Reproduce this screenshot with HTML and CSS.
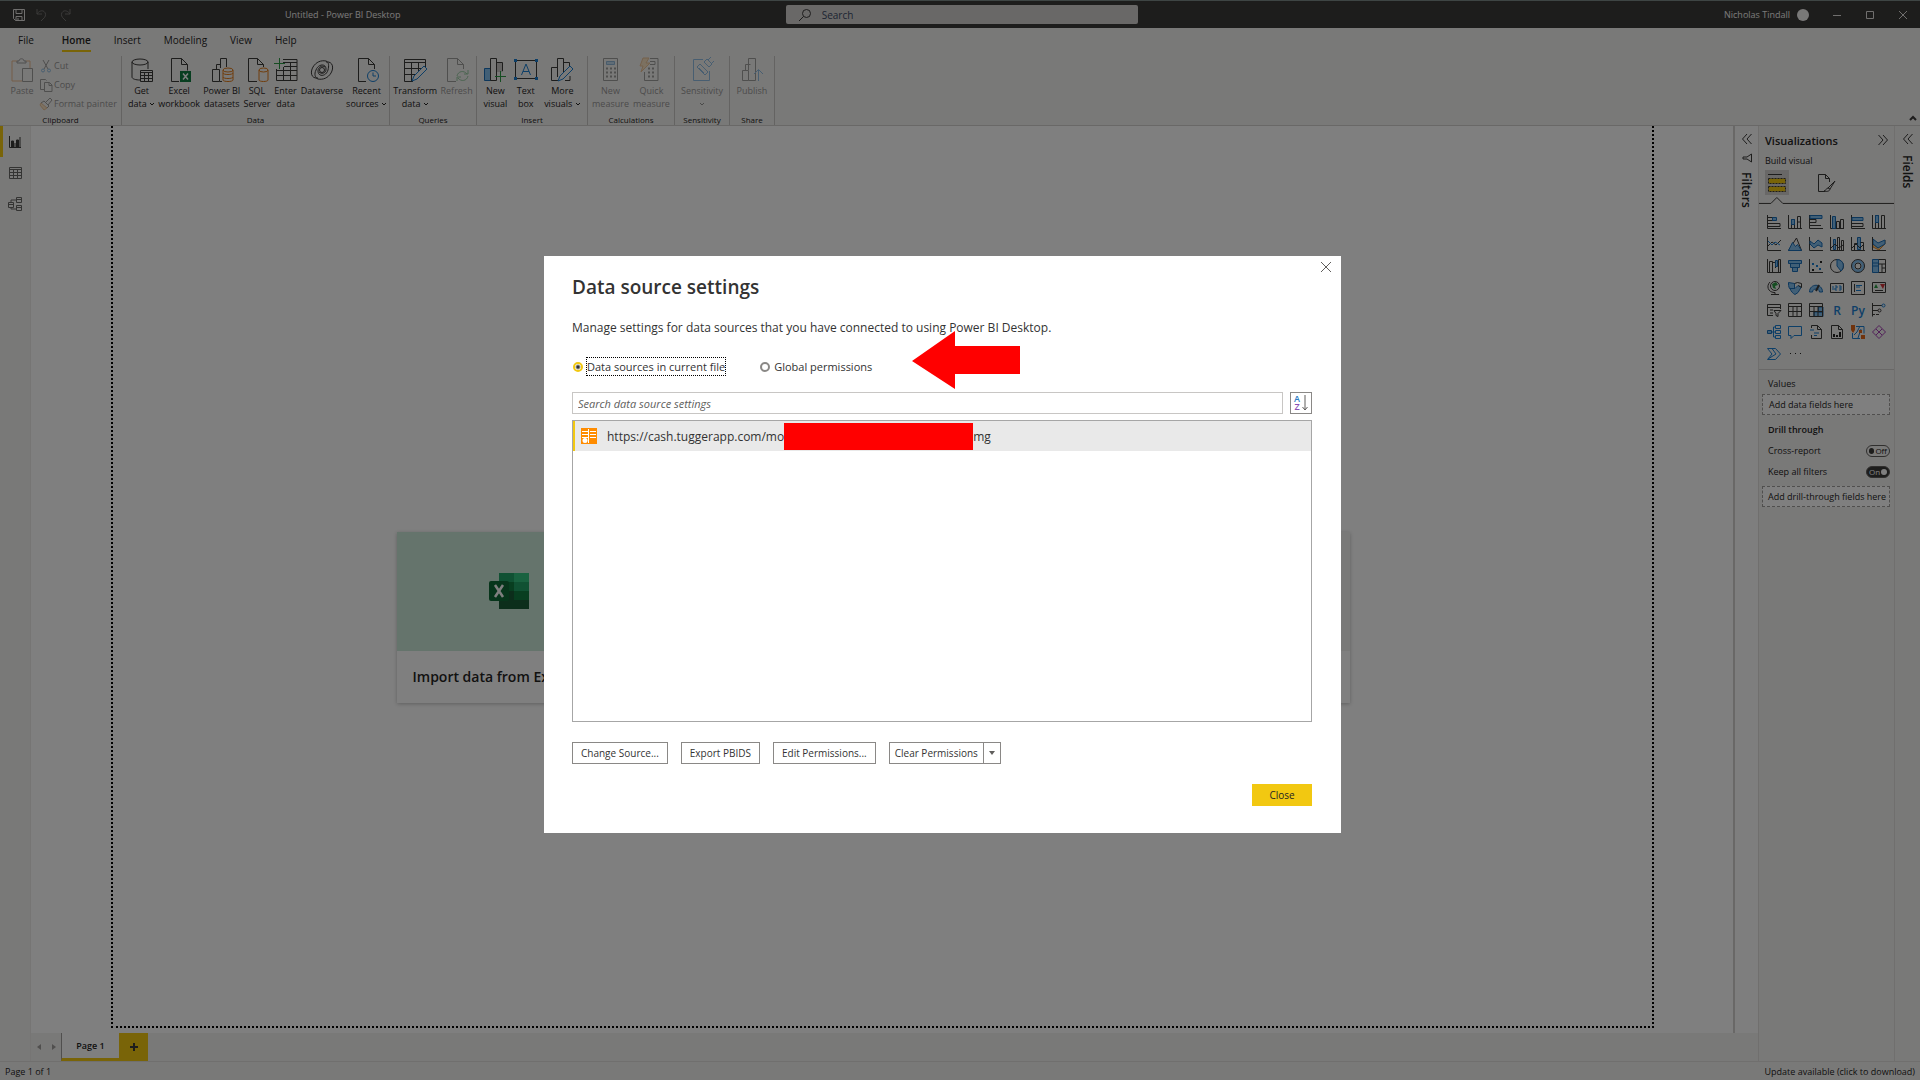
FILE: index.html
```html
<!DOCTYPE html>
<html lang="en">
<head>
    <meta charset="UTF-8">
    <meta name="viewport" content="width=device-width, initial-scale=1.0">
    <title>Untitled - Power BI Desktop</title>
    <link rel="stylesheet" href="styles.css">
</head>
<body>
    <div class="app">
        <header class="titlebar">
            <div class="quick">
                <button aria-label="Save"><svg class="ic14" viewBox="0 0 14 14"><path class="l" d="M1.500 1.500h11v11h-9l-2-2zM4 1.500v4h6v-4M4 12.500v-4h6v4M6 10v2"/></svg></button>
                <button class="off" aria-label="Undo"><svg class="ic14" viewBox="0 0 14 14"><path class="l" d="M2 1v5h5M2 6c2-3 5-4 7-2.500s2 4 .5 6L6 13"/></svg></button>
                <button class="off" aria-label="Redo"><svg class="ic14" viewBox="0 0 14 14"><path class="l" d="M12 1v5H7M12 6c-2-3-5-4-7-2.500s-2 4-.5 6L8 13"/></svg></button>
            </div>
            <div class="doc-title">Untitled - Power BI Desktop</div>
            <label class="top-search">
                <svg class="ic14" viewBox="0 0 14 14"><circle class="k" cx="8.500" cy="5.500" r="4"/><path class="k" d="M5.500 8.500L1 13"/></svg>
                <input type="text" placeholder="Search" aria-label="Search">
            </label>
            <div class="account">
                <span>Nicholas Tindall</span>
                <span class="avatar"></span>
                <button aria-label="Minimize"><svg class="ic10" viewBox="0 0 10 10"><path class="l" d="M1 5.500h8"/></svg></button>
                <button aria-label="Maximize"><svg class="ic10" viewBox="0 0 10 10"><path class="l" d="M1.500 1.500h7v7h-7z"/></svg></button>
                <button aria-label="Close window"><svg class="ic10" viewBox="0 0 10 10"><path class="l" d="M1 1l8 8M9 1L1 9"/></svg></button>
            </div>
        </header>

        <nav class="tabs">
            <a href="#" class="file">File</a>
            <a href="#" class="active">Home</a>
            <a href="#">Insert</a>
            <a href="#">Modeling</a>
            <a href="#">View</a>
            <a href="#">Help</a>
        </nav>

        <div class="ribbon">
            <section class="group g-clipboard">
                <div class="tools">
                    <button class="tool off"><svg class="ic24" viewBox="0 0 24 24"><path class="o" d="M7 3H2v20h10M16 3h4v7"/><path class="k" d="M7 5V3h2c0-3 5-3 5 0h2v2zM12.500 10.500h10v13h-10z"/></svg><span>Paste</span></button>
                    <div class="stack">
                        <button class="small off"><svg class="ic14" viewBox="0 0 14 14"><path class="k" d="M4 1l5 9M10 1L5 10"/><circle class="b" cx="4" cy="11.500" r="1.500"/><circle class="b" cx="10" cy="11.500" r="1.500"/></svg>Cut</button>
                        <button class="small off"><svg class="ic14" viewBox="0 0 14 14"><path class="k" d="M5 11.500H1.500v-10h5l1 1M5.500 4.500h5l2.500 2.500v6.500H5.500zM10 4.500v3h3"/></svg>Copy</button>
                        <button class="small off"><svg class="ic14" viewBox="0 0 14 14"><path class="of" d="M2 6l6 5-3 2-4-5z"/><path class="k" d="M5 4l5 5M7 5l4-4 2 2-4 5M2 6l3-2M8 11l2-2"/></svg>Format painter</button>
                    </div>
                </div>
                <h2>Clipboard</h2>
            </section>
            <section class="group g-data">
                <div class="tools">
                    <button class="tool"><svg class="ic24" viewBox="0 0 24 24"><ellipse class="k" cx="10" cy="4" rx="8" ry="3"/><path class="k" d="M2 4v15c0 2 4 3 8 3M18 4v7"/><path class="k" d="M10.500 12.500h12v11h-12zM10.500 14.500h12M10.500 17.500h12M10.500 20.500h12M14.500 14v9.500M18.500 14v9.500"/></svg><span>Get<br>data <svg class="chev" viewBox="0 0 6 6"><path d="M1 2l2 2 2-2"/></svg></span></button>
                    <button class="tool"><svg class="ic24" viewBox="0 0 24 24"><path class="k" d="M12 23.500H4.500v-23h10l6 6v6M14.500.500v6h6"/><path class="gf" d="M13 13h11v11H13z"/><path class="w" d="M16 15.500l5 6M21 15.500l-5 6"/></svg><span>Excel<br>workbook</span></button>
                    <button class="tool"><svg class="ic24" viewBox="0 0 24 24"><path class="k" d="M2.500 11.500h7v12h-7zM6.500 11V6.500h4M10.500 10V.500h6V9M9.500 23.500H12"/><path class="o" d="M13 12v10c0 2 10 2 10 0V12M13 15c0 2 10 2 10 0M13 19c0 2 10 2 10 0"/><ellipse class="o" cx="18" cy="12" rx="5" ry="2"/></svg><span>Power BI<br>datasets</span></button>
                    <button class="tool"><svg class="ic24" viewBox="0 0 24 24"><path class="k" d="M12 23.500H3.500v-23h9l6 6V9M12.500.500v6h6"/><path class="o" d="M14 12v10c0 2 9 2 9 0V12"/><ellipse class="o" cx="18.500" cy="12" rx="4.500" ry="2"/></svg><span>SQL<br>Server</span></button>
                    <button class="tool"><svg class="ic24" viewBox="0 0 24 24"><path class="k" d="M9 1.500h14v21H2.500V11M9 4.500h14M10 8.500h13M2.500 12.500H23M2.500 17.500H23M9.500 9v13.500M16.500 5v17.500"/><path class="g" d="M5.500 0v11M0 5.500h11"/></svg><span>Enter<br>data</span></button>
                    <button class="tool"><svg class="ic24" viewBox="0 0 24 24"><path class="k" d="M8 20C1 21 0 14 3 9s8-7 13-6c3 1 3 5 2 9-2 7-10 7-10 1 0-4 4-6 7-4M16 4c7-1 8 6 5 11s-8 7-13 6c-3-1-4-5-2-9 2-6 10-7 10-1 0 5-5 5-7 3"/><circle class="k" cx="12" cy="12" r="2.500"/></svg><span>Dataverse</span></button>
                    <button class="tool"><svg class="ic24" viewBox="0 0 24 24"><path class="k" d="M11 23.500H3.500v-23h10l6 6V11M13.500.500v6h6"/><circle class="b" cx="18" cy="18" r="5.500"/><path class="b" d="M18 14.500V18h3"/></svg><span>Recent<br>sources <svg class="chev" viewBox="0 0 6 6"><path d="M1 2l2 2 2-2"/></svg></span></button>
                </div>
                <h2>Data</h2>
            </section>
            <section class="group g-queries">
                <div class="tools">
                    <button class="tool"><svg class="ic24" viewBox="0 0 24 24"><path class="k" d="M10 23.500H1.500v-22h21V9M1.500 4.500h21M1.500 10.500h17M1.500 16.500H13M8.500 5v18M15.500 5v8"/><path class="b" d="M9 23l2-5L21 8l3 3-10 10z"/></svg><span>Transform<br>data <svg class="chev" viewBox="0 0 6 6"><path d="M1 2l2 2 2-2"/></svg></span></button>
                    <button class="tool off"><svg class="ic24" viewBox="0 0 24 24"><path class="k" d="M11 23.500H2.500v-23h10l6 6V11M12.500.500v6h6"/><path class="g" d="M23 12v4h-4M22 16c-3-4-9-3-10 2M12 23v-4h4M13 20c3 4 9 3 10-2"/></svg><span>Refresh</span></button>
                </div>
                <h2>Queries</h2>
            </section>
            <section class="group g-insert">
                <div class="tools">
                    <button class="tool"><svg class="ic24" viewBox="0 0 24 24"><path class="bf" d="M1.500 10.500h6v12h-6z"/><path class="k" d="M7.500 22.500V.500h6v22z"/><path class="s" d="M14 5h6v9h-6z"/><path class="k" d="M13.500 4.500h6V13"/><path class="g" d="M17.500 13v11M12 18.500h11"/></svg><span>New<br>visual</span></button>
                    <button class="tool"><svg class="ic24" viewBox="0 0 24 24"><path class="k" d="M1.500 2.500h21v18h-21z"/><path class="bs" d="M0 1h3v3H0zM21 1h3v3h-3zM0 19h3v3H0zM21 19h3v3h-3z"/><path class="b" d="M7.500 17L12 6l4.500 11M9 13.500h6"/></svg><span>Text<br>box</span></button>
                    <button class="tool"><svg class="ic24" viewBox="0 0 24 24"><path class="k" d="M8 22.500H1.500v-13h6M7.500 19V.500h6V14M13.500 4.500h6V8M15 22.500h5V18"/><path class="b" d="M8 23l2-5L20 8l3 3-10 10z"/></svg><span>More<br>visuals <svg class="chev" viewBox="0 0 6 6"><path d="M1 2l2 2 2-2"/></svg></span></button>
                </div>
                <h2>Insert</h2>
            </section>
            <section class="group g-calc">
                <div class="tools">
                    <button class="tool off"><svg class="ic24" viewBox="0 0 24 24"><path class="k" d="M4.500.500h14v22h-14z"/><path class="bf" d="M7.500 3.500h8v3h-8z"/><path class="dots" d="M7 10.500h10M7 14.500h10M7 18.500h10"/></svg><span>New<br>measure</span></button>
                    <button class="tool off"><svg class="ic24" viewBox="0 0 24 24"><path class="k" d="M11 .500h8v22H5.500V14M11 3.500h5v3h-5"/><path class="dots" d="M9 10.500h8M9 14.500h8M9 18.500h8"/><path class="of" d="M4 0h6L7 5h4l-9 9 2-6H1z"/></svg><span>Quick<br>measure</span></button>
                </div>
                <h2>Calculations</h2>
            </section>
            <section class="group g-sens">
                <div class="tools">
                    <button class="tool off"><svg class="ic24" viewBox="0 0 24 24"><path class="b" d="M13 1.500H3.500v21h16V13M7 9l3-3 8 8-3 3zM9 10l5 5M14 4l3-3 5 5-3 3zM18 2l3-3M22 5l2-2"/></svg><span>Sensitivity<br><svg class="chev" viewBox="0 0 6 6"><path d="M1 2l2 2 2-2"/></svg></span></button>
                </div>
                <h2>Sensitivity</h2>
            </section>
            <section class="group g-share">
                <div class="tools">
                    <button class="tool off"><svg class="ic24" viewBox="0 0 24 24"><path class="k" d="M2.500 12.500h6v10h-6zM5.500 12V6.500h5M8.500 12V.500h7V10M8.500 22.500h7V10"/><path class="b" d="M18.500 23V12M14 16l4.500-4.500L23 16"/></svg><span>Publish</span></button>
                </div>
                <h2>Share</h2>
            </section>
            <button class="collapse" aria-label="Collapse ribbon"><svg class="ic10" viewBox="0 0 10 10"><path class="k thick" d="M2 7l3-3 3 3"/></svg></button>
        </div>

        <main class="workspace">
            <nav class="rail">
                <button class="active" aria-label="Report view"><svg class="ic14" viewBox="0 0 14 14"><path class="k" d="M1.500 1v11.500H13M4.500 12V6M7 12V8M9.500 12V5M12 12V2M3.500 12V6h2v6M8.500 12V5h2v7"/></svg></button>
                <button aria-label="Data view"><svg class="ic14" viewBox="0 0 14 14"><path class="k" d="M1.500 1.500h12v11h-12zM1.500 3.500h12M1.500 6.500h12M1.500 9.500h12M5.500 3v9.500M9.500 3v9.500"/></svg></button>
                <button aria-label="Model view"><svg class="ic14" viewBox="0 0 14 14"><path class="k" d="M.500 5.500h5v5h-5zM.500 7.500h5M8.500.500h5v5h-5zM8.500 2.500h5M8.500 8.500h5v5h-5zM8.500 10.500h5M3 5V3h5M3 11v1h5"/></svg></button>
            </nav>

            <div class="center">
                <div class="report-row">
                    <div class="report">
                        <div class="page">
                            <article class="card excel">
                                <div class="art">
                                    <svg class="excel-logo" viewBox="0 0 40 36"><path fill="#21a366" d="M10 0h30v9H10z"/><path fill="#107c41" d="M10 9h15v18H10z"/><path fill="#33c481" d="M25 0h15v9H25z"/><path fill="#21a366" d="M25 9h15v9H25z"/><path fill="#107c41" d="M25 18h15v9H25z"/><path fill="#185c37" d="M10 18h15v9H10zM10 27h30v9H10z"/><rect fill="#0e6b36" y="8" width="20" height="20" rx="2"/><path stroke="#fff" stroke-width="2.500" d="M6 12l8 12M14 12L6 24"/></svg>
                                </div>
                                <h3>Import data from Excel</h3>
                            </article>
                            <article class="card"><div class="art"></div></article>
                            <article class="card"><div class="art"></div></article>
                            <article class="card"><div class="art"></div></article>
                        </div>
                    </div>
                    <aside class="side filters">
                        <button aria-label="Expand filters"><svg class="ic10" viewBox="0 0 10 10"><path class="k" d="M5 0L.500 5 5 10M9.500 0L5 5l4.500 5"/></svg></button>
                        <svg class="ic10" viewBox="0 0 10 10"><path class="k" d="M9.500 1v8L5 6H1V4h4z"/></svg>
                        <span>Filters</span>
                    </aside>
                </div>
                <div class="pagebar">
                    <button class="arrow" aria-label="Previous page"><svg class="ic6" viewBox="0 0 6 6"><path d="M5 0v6L1 3z"/></svg></button>
                    <button class="arrow" aria-label="Next page"><svg class="ic6" viewBox="0 0 6 6"><path d="M1 0v6l4-3z"/></svg></button>
                    <button class="page-tab">Page 1</button>
                    <button class="add-page" aria-label="New page"><svg class="ic10" viewBox="0 0 10 10"><path d="M5 1v8M1 5h8"/></svg></button>
                </div>
            </div>

            <aside class="viz">
                <div class="viz-head">
                    <h2>Visualizations</h2>
                    <button aria-label="Collapse visualizations"><svg class="ic10" viewBox="0 0 10 10"><path class="k" d="M.500 0L5 5 .500 10M5 0l4.500 5L5 10"/></svg></button>
                </div>
                <h3>Build visual</h3>
                <div class="modes">
                    <button class="active" aria-label="Build visual"><svg class="ic20" viewBox="0 0 20 20"><path class="k" d="M1 1.500h14"/><path class="y" d="M1.500 5.500h17v5h-17zM1.500 13.500h17v5h-17z"/></svg></button>
                    <button aria-label="Format visual"><svg class="ic20" viewBox="0 0 20 20"><path class="k" d="M9 18.500H2.500v-17h7l4 4V9M9.500 1.500v4h4M19 8l-7 7M19 8l-5 8M12 15c-2 0-2 3-4 3 3 1 6 0 6-2z"/></svg></button>
                </div>
                <svg class="notch" viewBox="0 0 136 8" preserveAspectRatio="xMinYMin"><path class="k" d="M0 6.500h12l6-6 6 6h112"/></svg>
                <div class="gallery">
                    <button aria-label="Stacked bar"><svg viewBox="0 0 14 14"><path class="k" d="M.500 0v13.500H14M1 2.500h5v3H1M1 8.500h12v3H1"/><path class="bf" d="M5.500 2.500h4v3h-4z"/></svg></button>
                    <button aria-label="Stacked column"><svg viewBox="0 0 14 14"><path class="k" d="M.500 0v13.500H14M3.500 13V4.500h3V13M9.500 13V1.500h3V13M9.500 7h3"/><path class="bf" d="M3.500 4.500h3v5h-3z"/></svg></button>
                    <button aria-label="Clustered bar"><svg viewBox="0 0 14 14"><path class="k" d="M.500 0v13.500H14M1 4.500h6v3H1M1 10.500h11"/><path class="bf" d="M1 .500h12v3H1z"/></svg></button>
                    <button aria-label="Clustered column"><svg viewBox="0 0 14 14"><path class="k" d="M.500 0v13.500H14M6.500 13V6.500h3V13M10.500 13V4.500h3V13"/><path class="bf" d="M2.500 1.500h3v12h-3z"/></svg></button>
                    <button aria-label="100% stacked bar"><svg viewBox="0 0 14 14"><path class="k" d="M.500 0v13.500H14M1 8.500h11v3H1"/><path class="bf" d="M1 2.500h11v3H1z"/></svg></button>
                    <button aria-label="100% stacked column"><svg viewBox="0 0 14 14"><path class="k" d="M.500 0v13.500H14M9.500 13V.500h3V13M3.500 13V.500h3V13"/><path class="bf" d="M3.500 .500h3v7h-3z"/></svg></button>

                    <button aria-label="Line"><svg viewBox="0 0 14 14"><path class="k" d="M.500 0v13.500H14M1 9l4-4 4 3 5-5"/><path class="b" d="M1 4l4 4 3-3 5 3"/></svg></button>
                    <button aria-label="Area"><svg viewBox="0 0 14 14"><path class="k" d="M.500 13.500L8.500 1l5 12.500z"/><path class="bf" d="M.500 13.500l4-8 3 4 2-2 4 6z"/></svg></button>
                    <button aria-label="Stacked area"><svg viewBox="0 0 14 14"><path class="k" d="M.500 0v13.500H14"/><path class="bf" d="M1 4l4 3 4-4 4 3v4l-4-2-4 3-4-4z"/></svg></button>
                    <button aria-label="Line and stacked column"><svg viewBox="0 0 14 14"><path class="bf" d="M3.500 2.500h2v10h-2z"/><path class="k" d="M.500 0v13.500H14M7.500 13V.500h2V13M11.500 13V3.500h2V13M1 11l4-4 4 4 4-3"/></svg></button>
                    <button aria-label="Line and clustered column"><svg viewBox="0 0 14 14"><path class="bf" d="M6.500 .500h3v12h-3z"/><path class="k" d="M.500 0v13.500H14M3.500 13V6.500h3M9.500 5.500h3V13M1 11l4-4 4 4 4-4"/></svg></button>
                    <button aria-label="Ribbon"><svg viewBox="0 0 14 14"><path class="of" d="M1 7l5 4 7-8v4l-6 6-6-3z"/><path class="bf" d="M1 2l5 4 7-3v4l-7 4-5-4z"/><path class="k" d="M.500 0v13.500H14"/></svg></button>

                    <button aria-label="Waterfall"><svg viewBox="0 0 14 14"><path class="k" d="M.500 0v13.500H14M2.500 13V2.500h3V13M5.500 3.500h3V9M11.500 13V.500h2V13"/><path class="bf" d="M8.500 1.500h2v6h-2z"/></svg></button>
                    <button aria-label="Funnel"><svg viewBox="0 0 14 14"><path class="bf" d="M.500 1.500h13v3H.500zM2.500 4.500h9v4h-9zM4.500 8.500h5v4h-5z"/></svg></button>
                    <button aria-label="Scatter"><svg viewBox="0 0 14 14"><path class="k" d="M.500 0v13.500H14"/><path class="bs" d="M3 4h2v2H3zM7 6h2v2H7zM10 9h2v2h-2z"/><path class="ks" d="M11 2h2v2h-2zM3 10h2v2H3z"/></svg></button>
                    <button aria-label="Pie"><svg viewBox="0 0 14 14"><circle class="k" cx="7" cy="7" r="6.500"/><path class="bf" d="M7 .500V7l4 5c4-4 3-11-4-11.500z"/></svg></button>
                    <button aria-label="Donut"><svg viewBox="0 0 14 14"><circle class="ring" cx="7" cy="7" r="5"/><circle class="k" cx="7" cy="7" r="6.500"/><circle class="k" cx="7" cy="7" r="3"/></svg></button>
                    <button aria-label="Treemap"><svg viewBox="0 0 14 14"><path class="bf" d="M.500.500h6v13h-6zM.500 7h6M.500 4h6"/><path class="k" d="M6.500.500h7v13h-7M6.500 5h7M10 5v8M10 9h3"/></svg></button>

                    <button aria-label="Map"><svg viewBox="0 0 14 14"><circle class="k" cx="8" cy="5" r="4.500"/><path class="gs" d="M5 3l4-2 2 3-3 1 1 3-3-1z"/><path class="k" d="M3 1C-1 5 1 11 7 11.500h1v2M4 13.500h8"/></svg></button>
                    <button aria-label="Filled map"><svg viewBox="0 0 14 14"><path class="bf" d="M.500 1.500l6 1v5h-5c-1-2-1-4-1-6zM2 7.500h5l3-3 3 2-3 5-3 2c-2-1-4-3-5-6z"/><path class="k" d="M6.500 2.500l3-1 4 1v4l-3-2"/></svg></button>
                    <button aria-label="Gauge"><svg viewBox="0 0 14 14"><path class="bf" d="M.500 11c0-9 13-9 13 0h-3c0-4-7-4-7 0z"/><path class="k thick" d="M7 10l3-6"/></svg></button>
                    <button aria-label="Card"><svg viewBox="0 0 14 14"><path class="k" d="M.500 2.500h13v9H.500z"/><path class="b" d="M3 5v4M5 5h2v2H5v2h2M9 5h2v4H9M9 7h2"/></svg></button>
                    <button aria-label="Multi-row card"><svg viewBox="0 0 14 14"><path class="k" d="M.500.500h13v13H.500zM3.500 3v8"/><path class="b" d="M5 4.500h6M5 6h4M5 9.500h5"/></svg></button>
                    <button aria-label="KPI"><svg viewBox="0 0 14 14"><path class="k" d="M.500 1.500h13v10H.500zM3 9.500h8"/><path class="gs" d="M2 7l2-4 2 4z"/><path class="rs" d="M8 3h5l-2 5z"/></svg></button>

                    <button aria-label="Slicer"><svg viewBox="0 0 14 14"><path class="k" d="M6 12.500H.500v-11h13V6M.500 4.500h13M3 7h3M3 10h3M7 7.500h7l-3 3v3l-2-1v-2z"/></svg></button>
                    <button aria-label="Table"><svg viewBox="0 0 14 14"><path class="k" d="M.500.500h13v13H.500zM.500 3.500h13M.500 8.500h13M5 3v10M9 3v10"/></svg></button>
                    <button aria-label="Matrix"><svg viewBox="0 0 14 14"><path class="bf" d="M5 9h9v4.500H5zM9.500 4H14v5H9.500z"/><path class="k" d="M.500.500h13v13H.500zM.500 3.500h13M.500 8.500h13M5 3v10M9 3v10"/></svg></button>
                    <button class="letter">R</button>
                    <button class="letter">Py</button>
                    <button aria-label="Key influencers"><svg viewBox="0 0 14 14"><path class="k" d="M.500 0v13.500M1 2.500h9M1 7.500h5M1 11.500h2"/><circle class="b" cx="11.500" cy="2.500" r="1.500"/><circle class="k" cx="7.500" cy="7.500" r="1.500"/><path class="k" d="M4 11.500h3"/></svg></button>

                    <button aria-label="Decomposition tree"><svg viewBox="0 0 14 14"><path class="bf" d="M.500 5.500h4v3h-4z"/><path class="b" d="M8.500 .500h5v3h-5zM8.500 5.500h5v3h-5zM8.500 10.500h5v3h-5zM5 7h3M6.500 2v10M6.500 2H8M6.500 12H8"/></svg></button>
                    <button aria-label="Q&amp;A"><svg viewBox="0 0 14 14"><path class="b" d="M.500 1.500h13v9H6l-3 3v-3H.500z"/></svg></button>
                    <button aria-label="Smart narrative"><svg viewBox="0 0 14 14"><path class="k" d="M2.500 3V.500h6l4 4v9h-10V10M8.500.500v4h4"/><path class="b" d="M1 5h4M5 8h5M5 10.500h3"/></svg></button>
                    <button aria-label="Paginated report"><svg viewBox="0 0 14 14"><path class="k" d="M1.500.500h7l4 4v9h-11zM8.500.500v4h4"/><path class="ks" d="M3 9h2v3H3zM6 10h2v2H6zM9 7h2v5H9z"/></svg></button>
                    <button aria-label="ArcGIS map"><svg viewBox="0 0 14 14"><path class="b" d="M5 1.500h8v7M1.500 8v5.500H9M9 1l-3 6-3 3M10 4l-3 9"/><path class="os" d="M0 0h4v5L2 8 0 5zM8 5h3v3H8zM10 10h4v4h-4z"/></svg></button>
                    <button aria-label="Power Apps"><svg viewBox="0 0 14 14"><path class="p" d="M7 .500L13.500 7 7 13.500.500 7zM4 4l6 6M10 4l-6 6"/></svg></button>

                    <button aria-label="Power Automate"><svg viewBox="0 0 14 14"><path class="b" d="M.500 1.500h8l5 5.500-5 5.500h-8L5 7zM5 1.500L9 7l-8 5"/></svg></button>
                    <button aria-label="More visuals"><svg viewBox="0 0 14 14"><path class="ks" d="M2 6h1v1H2zM7 6h1v1H7zM12 6h1v1h-1z"/></svg></button>
                </div>
                <div class="wells">
                    <h4 class="plain">Values</h4>
                    <div class="well">Add data fields here</div>
                    <h4>Drill through</h4>
                    <label class="switch">Cross-report <input type="checkbox"><span class="knob"></span></label>
                    <label class="switch">Keep all filters <input type="checkbox" checked><span class="knob"></span></label>
                    <div class="well drill">Add drill-through fields here</div>
                </div>
            </aside>

            <aside class="side fields">
                <button aria-label="Expand fields"><svg class="ic10" viewBox="0 0 10 10"><path class="k" d="M5 0L.500 5 5 10M9.500 0L5 5l4.500 5"/></svg></button>
                <span>Fields</span>
            </aside>
        </main>

        <footer class="status">
            <span>Page 1 of 1</span>
            <a href="#">Update available (click to download)</a>
        </footer>
    </div>

    <div class="backdrop">
        <div class="dialog" role="dialog" aria-labelledby="dialog-title">
            <button class="dismiss" aria-label="Close dialog"><svg viewBox="0 0 12 12"><path d="M1 1l10 10M11 1L1 11"/></svg></button>
            <h1 id="dialog-title">Data source settings</h1>
            <p>Manage settings for data sources that you have connected to using Power BI Desktop.</p>
            <div class="scope">
                <label><input type="radio" name="scope" checked><span>Data sources in current file</span></label>
                <label><input type="radio" name="scope"><span>Global permissions</span></label>
                <svg class="pointer" viewBox="0 0 108 58"><path d="M0 30L43 0v15h65v28H43v15z"/></svg>
            </div>
            <div class="search-row">
                <input type="text" placeholder="Search data source settings" aria-label="Search data source settings">
                <button class="sort" aria-label="Sort A to Z"><span><b>A</b><i>Z</i></span><svg viewBox="0 0 6 16"><path d="M3 0v15M.500 12L3 15l2.500-3"/></svg></button>
            </div>
            <ul class="sources">
                <li>
                    <svg class="source-icon" viewBox="0 0 16 16"><path fill="#ff8c00" d="M0 0h16v16H0z"/><path stroke="#fff" d="M1 3.500h6M9 3.500h6M1 6.500h6M9 6.500h6M9 9.500h6M1 9.500h6M7.500 1v14"/><circle fill="#fff" cx="4" cy="12.500" r="2.500"/></svg>
                    <span>https://cash.tuggerapp.com/mo</span><span class="redacted"></span><span>mg</span>
                </li>
            </ul>
            <div class="actions">
                <button>Change Source...</button>
                <button>Export PBIDS</button>
                <button>Edit Permissions...</button>
                <div class="split">
                    <button>Clear Permissions</button>
                    <button aria-label="More clear options"><svg viewBox="0 0 6 4"><path d="M0 0h6L3 4z"/></svg></button>
                </div>
            </div>
            <div class="footer"><button class="primary">Close</button></div>
        </div>
    </div>
</body>
</html>
```
FILE: styles.css
```css
* {
    box-sizing: border-box;
}

body {
    margin: 0;
    font-family: "Open Sans", "Noto Sans", sans-serif;
    font-size: 9px;
    color: #252423;
}

h1, h2, h3, h4, p, ul {
    margin: 0;
    padding: 0;
}

button {
    display: flex;
    align-items: center;
    justify-content: center;
    padding: 0;
    border: none;
    background: none;
    font: inherit;
    color: inherit;
    white-space: nowrap;
}

input {
    margin: 0;
    font: inherit;
    color: inherit;
}

a {
    color: inherit;
    text-decoration: none;
}

svg {
    display: block;
    flex: none;
    overflow: visible;
    fill: none;
}

/* icon sizes */
.ic6 { width: 6px; height: 6px; }
.ic10 { width: 10px; height: 10px; }
.ic14 { width: 14px; height: 14px; }
.ic20 { width: 20px; height: 20px; }
.ic24 { width: 24px; height: 24px; }

/* icon strokes and fills */
.k { stroke: #3b3a39; }
.l { stroke: #e1dfdd; }
.w { stroke: #fff; stroke-width: 1.5; }
.b { stroke: #1b7fd0; }
.o { stroke: #e07b1a; }
.g { stroke: #2c9a45; }
.p { stroke: #a33fb0; }
.thick { stroke-width: 2; }
.bf { fill: #83beec; stroke: #1b6fb8; }
.bs { fill: #1b7fd0; }
.ks { fill: #252423; }
.gf { fill: #107c41; }
.gs { fill: #2c9a45; }
.rs { fill: #d13438; }
.os { fill: #e0661a; }
.of { fill: #ffcf8a; stroke: #e08a2e; }
.s { fill: #c8c6c4; }
.y { fill: #f2c811; stroke: #3b3a39; stroke-dasharray: 2 1; }
.ring { stroke: #83beec; stroke-width: 3; }
.dots { stroke: #3b3a39; stroke-width: 2; stroke-dasharray: 2 2; }

.app {
    display: flex;
    flex-direction: column;
    height: 100vh;
    background: #f3f2f1;
}

.titlebar {
    display: grid;
    grid-template-columns: 285px 13fr 352px 20fr;
    align-items: center;
    height: 28px;
    padding-right: 12px;
    border-top: 1px solid #7c8a88;
    background: #3b3a39;
    color: #f3f2f1;
}

.quick {
    display: flex;
    gap: 9px;
    padding-left: 12px;
}

.off {
    opacity: .45;
}

.quick .off {
    opacity: .35;
}

.top-search {
    display: flex;
    align-items: center;
    gap: 8px;
    height: 19px;
    padding-left: 12px;
    border-radius: 2px;
    background: #d2d0ce;
}

.top-search input {
    flex: 1;
    min-width: 0;
    border: none;
    background: none;
    font-size: 10px;
}

.top-search input::placeholder {
    color: #3b4a66;
    opacity: 1;
}

.account {
    display: flex;
    align-items: center;
    justify-content: flex-end;
    gap: 23px;
}

.avatar {
    width: 12px;
    height: 12px;
    margin-left: -16px;
    border-radius: 50%;
    background: #f3f2f1;
}

.tabs {
    display: flex;
    gap: 23px;
    height: 28px;
    padding-left: 18px;
    font-size: 10px;
    line-height: 24px;
}

.tabs a {
    height: 24px;
}

.tabs .file {
    margin-right: 5px;
}

.tabs .active {
    border-bottom: 2px solid #f2c811;
    font-weight: 600;
}

.ribbon {
    display: flex;
    height: 70px;
    border-bottom: 1px solid #d2d0ce;
}

.group {
    display: flex;
    flex-direction: column;
    justify-content: space-between;
    border-right: 1px solid #c8c6c4;
}

.group h2 {
    font-size: 8px;
    font-weight: 400;
    line-height: 10px;
    text-align: center;
}

.g-clipboard { width: 122px; }
.g-data { width: 268px; }
.g-queries { width: 87px; }
.g-insert { width: 111px; }
.g-calc { width: 87px; }
.g-sens { width: 55px; }
.g-share { width: 45px; }

.tools {
    display: flex;
    justify-content: space-evenly;
}

.g-clipboard .tools {
    justify-content: flex-start;
    gap: 5px;
    padding-left: 10px;
}

.g-data .tools {
    justify-content: space-between;
    padding: 0 2px 0 6px;
}

.tool {
    flex-direction: column;
    justify-content: flex-start;
    gap: 2px;
    padding-top: 2px;
    line-height: 13px;
}

.chev {
    display: inline-block;
    width: 6px;
    height: 6px;
    stroke: currentColor;
}

.stack {
    display: flex;
    flex-direction: column;
}

.small {
    justify-content: flex-start;
    gap: 1px;
    height: 19px;
}

.collapse {
    align-self: flex-end;
    margin-left: auto;
    padding: 2px;
}

.workspace {
    display: flex;
    flex: 1;
    min-height: 0;
}

.rail {
    width: 31px;
    border-right: 1px solid #edebe9;
}

.rail button {
    width: 100%;
    height: 31px;
    opacity: .75;
}

.rail .active {
    border-left: 3px solid #f2c811;
    padding-right: 3px;
    opacity: 1;
}

.center {
    display: flex;
    flex: 1;
    flex-direction: column;
    min-width: 0;
}

.report-row {
    display: flex;
    flex: 1;
    background: #fff;
}

.report {
    flex: 1;
    padding: 0 79px 5px 80px;
    border-right: 2px solid #d2d0ce;
}

.page {
    display: flex;
    align-items: center;
    justify-content: center;
    gap: 19px;
    height: 100%;
    padding: 82px 19px 0 0;
    border: 2px dotted #000;
    border-top: none;
}

.card {
    width: 224px;
    height: 171px;
    background: #fff;
    box-shadow: 0 1px 4px rgba(0, 0, 0, .25);
}

.art {
    display: flex;
    align-items: center;
    justify-content: center;
    height: 119px;
    background: #f3f2f1;
}

.excel .art {
    background: #cbe8d8;
}

.excel-logo {
    width: 40px;
    height: 36px;
}

.card h3 {
    padding: 16px;
    font-size: 14px;
    font-weight: 600;
    line-height: 20px;
    white-space: nowrap;
}

.side {
    display: flex;
    flex-direction: column;
    align-items: center;
    gap: 11px;
    width: 25px;
    padding-top: 8px;
    font-size: 12px;
    font-weight: 600;
}

.side span {
    writing-mode: vertical-rl;
}

.filters {
    gap: 9px;
    width: 23px;
    padding-top: 8px;
    background: #fcfcfc;
}

.pagebar {
    display: flex;
    height: 28px;
}

.arrow {
    width: 15px;
}

.arrow path {
    fill: #a19f9d;
}

.page-tab {
    width: 58px;
    border-left: 1px solid #a19f9d;
    border-bottom: 3px solid #f2c811;
    background: #fff;
    font-weight: 600;
}

.add-page {
    width: 29px;
    background: #f2c811;
}

.add-page path {
    stroke: #3b3a39;
    stroke-width: 2;
}

.viz {
    width: 137px;
    border-left: 1px solid #e1dfdd;
    border-right: 1px solid #e1dfdd;
}

.viz-head {
    display: flex;
    align-items: center;
    justify-content: space-between;
    height: 28px;
    padding: 0 6px;
}

.viz h2 {
    font-size: 11px;
    font-weight: 600;
}

.viz h3 {
    padding-left: 6px;
    font-size: 9px;
    font-weight: 400;
    line-height: 14px;
}

.modes {
    display: flex;
    gap: 25px;
    padding: 2px 6px;
}

.modes button {
    width: 24px;
    height: 25px;
}

.modes .active {
    background: #d2d0ce;
}

.notch {
    width: 100%;
    height: 8px;
    overflow: hidden;
}

.gallery {
    display: grid;
    grid-template-columns: repeat(6, 14px);
    grid-auto-rows: 14px;
    gap: 8px 7px;
    padding: 10px 8px 8px;
}

.gallery svg {
    width: 14px;
    height: 14px;
}

.letter {
    color: #1b7fd0;
    font-size: 12px;
    font-weight: 600;
}

.wells {
    padding: 4px 4px 4px 3px;
    border-top: 1px solid #d2d0ce;
}

.wells h4 {
    padding-left: 6px;
    font-size: 9px;
    font-weight: 600;
    line-height: 20px;
}

.wells .plain {
    font-weight: 400;
}

.well {
    height: 21px;
    margin-bottom: 5px;
    padding-left: 6px;
    border: 1px dashed #a19f9d;
    background: #fff;
    line-height: 19px;
    white-space: nowrap;
}

.drill {
    margin-top: 4px;
    padding-left: 5px;
}

.switch {
    display: flex;
    align-items: center;
    justify-content: space-between;
    height: 21px;
    padding-left: 6px;
}

.switch input {
    position: absolute;
    opacity: 0;
}

.knob {
    display: flex;
    align-items: center;
    gap: 1px;
    width: 24px;
    height: 12px;
    padding: 0 2px;
    border: 1px solid #605e5c;
    border-radius: 6px;
    font-size: 8px;
}

.knob::before {
    content: "";
    width: 6px;
    height: 6px;
    border-radius: 50%;
    background: #3b3a39;
}

.knob::after {
    content: "Off";
}

.switch input:checked + .knob {
    flex-direction: row-reverse;
    background: #3b3a39;
    color: #fff;
}

.switch input:checked + .knob::before {
    background: #fff;
}

.switch input:checked + .knob::after {
    content: "On";
}

.status {
    display: flex;
    align-items: center;
    justify-content: space-between;
    height: 19px;
    padding: 0 5px;
    border-top: 1px solid #e1dfdd;
}

/* data source settings dialog */
.backdrop {
    position: fixed;
    inset: 0;
    display: flex;
    align-items: center;
    justify-content: center;
    padding: 9px 35px 0 0;
    background: rgba(0, 0, 0, .5);
}

.dialog {
    position: relative;
    width: 797px;
    padding: 18px 29px 27px 28px;
    background: #fff;
    color: #333;
    font-size: 12px;
}

.dismiss {
    position: absolute;
    top: 5px;
    right: 9px;
}

.dismiss svg {
    width: 12px;
    height: 12px;
    stroke: #605e5c;
}

.dialog h1 {
    font-size: 19px;
    font-weight: 600;
    line-height: 26px;
}

.dialog p {
    margin-top: 18px;
    line-height: 20px;
}

.scope {
    position: relative;
    display: flex;
    gap: 34px;
    margin-top: 19px;
    padding-left: 1px;
    font-size: 11px;
}

.scope label {
    display: flex;
    align-items: center;
    gap: 3px;
}

.scope input {
    width: 10px;
    height: 10px;
    border: 2px solid #8a8886;
    border-radius: 50%;
    appearance: none;
}

.scope input:checked {
    border-color: #f2c811;
    background: radial-gradient(#333 1px, #fff 3px);
}

.scope span {
    border: 1px solid transparent;
    line-height: 17px;
}

.scope input:checked + span {
    border: 1px dotted #000;
}

.pointer {
    position: absolute;
    left: 340px;
    top: -26px;
    width: 108px;
    height: 58px;
    fill: #f00;
}

.search-row {
    display: flex;
    gap: 7px;
    margin-top: 16px;
}

.search-row input {
    flex: 1;
    height: 22px;
    padding: 0 5px;
    border: 1px solid #c8c6c4;
    font-size: 11px;
}

.search-row input::placeholder {
    color: #605e5c;
    font-style: italic;
    opacity: 1;
}

.sort {
    gap: 2px;
    width: 22px;
    border: 1px solid #8a8886;
    font-size: 9px;
    line-height: 8px;
}

.sort b, .sort i {
    display: block;
    font-style: normal;
    font-weight: 600;
}

.sort b { color: #2b7cc4; }
.sort i { color: #8a4fb5; }

.sort svg {
    width: 6px;
    height: 16px;
    stroke: #605e5c;
}

.sources {
    height: 302px;
    margin-top: 6px;
    border: 1px solid #a6a6a6;
    list-style: none;
}

.sources li {
    display: flex;
    align-items: center;
    height: 30px;
    border-left: 2px solid #f2c811;
    padding-left: 6px;
    background: #e9e9e9;
}

.source-icon {
    width: 16px;
    height: 16px;
    margin-right: 10px;
}

.redacted {
    width: 189px;
    height: 27px;
    background: #f00;
}

.actions {
    display: flex;
    gap: 13px;
    margin-top: 20px;
    font-size: 10px;
}

.actions button {
    height: 22px;
    padding: 0 8px;
    border: 1px solid #8a8886;
}

.split {
    display: flex;
}

.actions .split button {
    padding: 0 5px;
}

.actions .split button + button {
    border-left: none;
}

.split svg {
    width: 6px;
    height: 4px;
    fill: #605e5c;
}

.footer {
    display: flex;
    justify-content: flex-end;
    margin-top: 20px;
}

.primary {
    width: 60px;
    height: 22px;
    background: #f2c811;
    color: #252423;
    font-size: 10px;
}
```
